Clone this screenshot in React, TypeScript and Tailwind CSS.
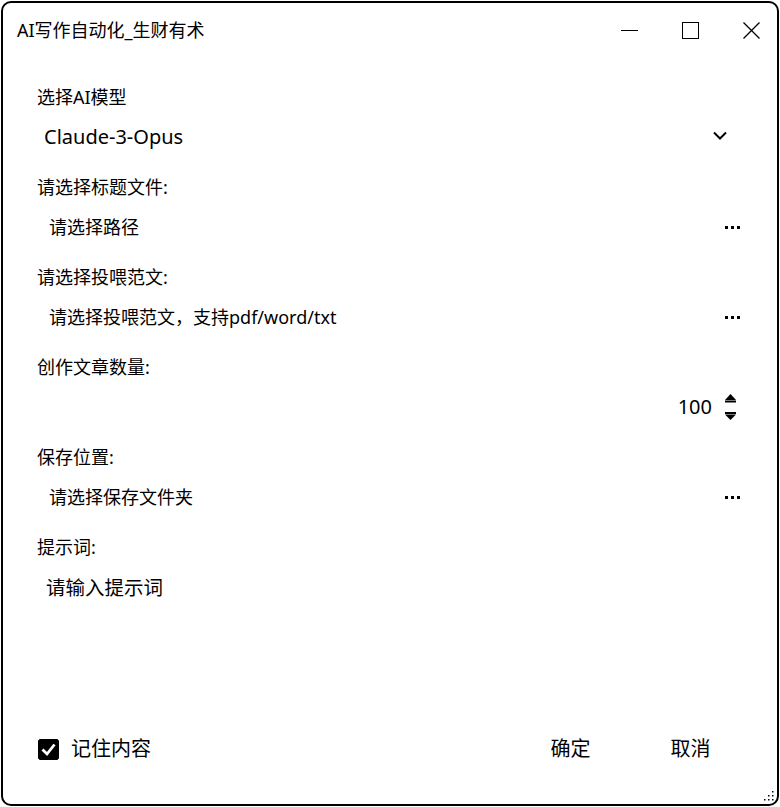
import React, { useState } from 'react';

const FONT = "font-['Noto_Sans','Noto_Sans_CJK_SC',sans-serif]";

const Ellipsis = () => (
  <div className="flex items-center gap-[3px] mr-[1px]">
    <span className="w-[3px] h-[3px] bg-black" />
    <span className="w-[3px] h-[3px] bg-black" />
    <span className="w-[3px] h-[3px] bg-black" />
  </div>
);

interface PathFieldProps {
  label: string;
  placeholder: string;
}

const PathField = ({ label, placeholder }: PathFieldProps) => (
  <div className="mb-[10px]">
    <div className="h-[40px] flex items-center text-[18px] leading-none">{label}</div>
    <div className="h-[40px] flex items-center justify-between pl-[12px]">
      <span className="text-[18px] leading-none">{placeholder}</span>
      <button className="h-full flex items-center pr-0">
        <Ellipsis />
      </button>
    </div>
  </div>
);

// size grip dots, bottom-right corner
const GRIP = [
  [8, 0], [8, 4], [4, 4], [8, 8], [4, 8], [0, 8],
];

export default function App() {
  const [count, setCount] = useState(100);
  const [remember, setRemember] = useState(true);

  return (
    <div className={`w-[780px] h-[807px] bg-white p-[1px] text-black ${FONT}`}>
      <div className="relative h-full border-2 border-black rounded-[10px] flex flex-col overflow-hidden">
        {/* title bar */}
        <div className="h-[54px] flex items-center justify-between pl-[14px] pr-[17px] shrink-0">
          <span className="text-[18px] leading-none">AI写作自动化_生财有术</span>
          <div className="flex items-center gap-[44px]">
            <svg width="17" height="17" viewBox="0 0 17 17" shapeRendering="crispEdges">
              <path d="M0 8.5H17" stroke="black" strokeWidth="1.2" />
            </svg>
            <svg width="17" height="17" viewBox="0 0 17 17" shapeRendering="crispEdges">
              <rect x="0.5" y="0.5" width="16" height="16" fill="none" stroke="black" strokeWidth="1.3" />
            </svg>
            <svg width="17" height="17" viewBox="0 0 17 17">
              <path d="M0.5 0.5L16.5 16.5M16.5 0.5L0.5 16.5" stroke="black" strokeWidth="1.3" />
            </svg>
          </div>
        </div>

        {/* form */}
        <div className="flex-1 flex flex-col pt-[20px] pl-[34px] pr-[36px]">
          <div className="mb-[10px]">
            <div className="h-[40px] flex items-center text-[18px] leading-none">选择AI模型</div>
            <div className="h-[40px] flex items-center justify-between pl-[7px]">
              <span className="text-[20px] leading-none">Claude-3-Opus</span>
              <svg width="14" height="9" viewBox="0 0 14 9" className="mr-[14px] mt-[-4px]">
                <path d="M1 1.5L7 7.5L13 1.5" fill="none" stroke="black" strokeWidth="2" />
              </svg>
            </div>
          </div>

          <PathField label="请选择标题文件:" placeholder="请选择路径" />
          <PathField label="请选择投喂范文:" placeholder="请选择投喂范文，支持pdf/word/txt" />

          <div className="mb-[10px]">
            <div className="h-[40px] flex items-center text-[18px] leading-none">创作文章数量:</div>
            <div className="h-[40px] flex items-center justify-end gap-[12px]">
              <span className="text-[20px] leading-none">{count}</span>
              <div className="flex flex-col items-center mr-[4px]">
                <button onClick={() => setCount(c => c + 1)} className="h-[12px] flex items-start">
                  <svg width="13" height="10" viewBox="0 0 13 10">
                    <path d="M6.5 1L12 7H1Z" fill="black" />
                    <rect x="1" y="7.5" width="11" height="2" fill="black" />
                  </svg>
                </button>
                <button onClick={() => setCount(c => Math.max(0, c - 1))} className="h-[10px] mt-[7px] flex items-start">
                  <svg width="13" height="8" viewBox="0 0 13 8">
                    <rect x="1" y="0" width="11" height="2" fill="black" />
                    <path d="M1 2.5H12L6.5 8Z" fill="black" />
                  </svg>
                </button>
              </div>
            </div>
          </div>

          <PathField label="保存位置:" placeholder="请选择保存文件夹" />

          <div className="flex-1 flex flex-col">
            <div className="h-[40px] flex items-center text-[18px] leading-none">提示词:</div>
            <textarea
              placeholder="请输入提示词"
              className="flex-1 resize-none outline-none border-0 bg-transparent pl-[9px] pt-[8px] text-[19.5px] leading-[26px] placeholder:text-black"
            />
          </div>
        </div>

        {/* footer */}
        <div className="h-[50px] mb-[30px] shrink-0 flex items-center justify-between pl-[35px] pr-[32px]">
          <label className="flex items-center gap-[12px] cursor-pointer">
            <button onClick={() => setRemember(r => !r)}>
              <svg width="21" height="21" viewBox="0 0 21 21">
                <rect x="0" y="0" width="21" height="21" rx="4" fill={remember ? 'black' : 'white'} stroke="black" />
                {remember && <path d="M4.5 10.5L9 15L16.5 5.5" fill="none" stroke="white" strokeWidth="2.8" />}
              </svg>
            </button>
            <span className="text-[20px] leading-none">记住内容</span>
          </label>
          <div className="flex items-center gap-[17px]">
            <button className="w-[103px] h-[40px] text-[20px] leading-none flex items-center justify-center pr-[6px]">确定</button>
            <button className="w-[103px] h-[40px] text-[20px] leading-none flex items-center justify-center pr-[6px]">取消</button>
          </div>
        </div>

        <svg width="10" height="10" viewBox="0 0 10 10" className="absolute right-[3px] bottom-[3px]">
          {GRIP.map(([x, y], i) => (
            <rect key={i} x={x} y={y} width="1.5" height="1.5" fill="black" />
          ))}
        </svg>
      </div>
    </div>
  );
}
